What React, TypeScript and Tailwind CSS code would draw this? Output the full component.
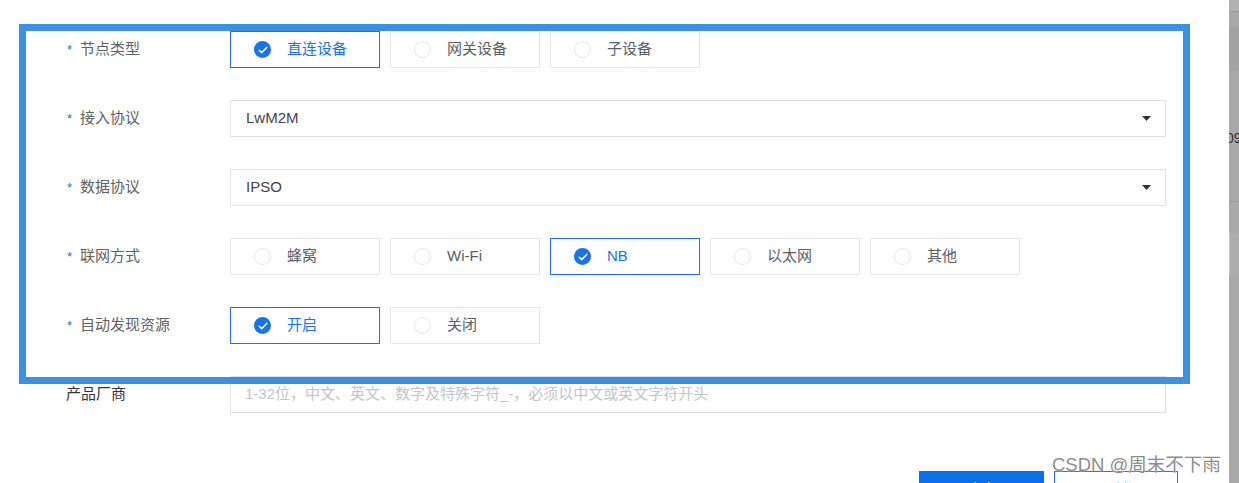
import React from "react";

type Opt = { label: string; checked?: boolean };

function Radio({ label, checked }: Opt) {
    return (
        <div
            className={`w-[150px] h-[37px] flex items-center pl-[23px] border ${
                checked ? "border-[#1a73e8]" : "border-[#e4e6eb]"
            } bg-white`}
        >
            {checked ? (
                <span className="w-[17px] h-[17px] rounded-full bg-[#1a73e8] flex items-center justify-center">
                    <svg width="10" height="8" viewBox="0 0 10 8" fill="none">
                        <path d="M1.2 4.2 L3.8 6.6 L8.8 1.4" stroke="white" strokeWidth="1.5" strokeLinecap="round" strokeLinejoin="round" />
                    </svg>
                </span>
            ) : (
                <span className="w-[17px] h-[17px] rounded-full border border-[#e2e4e8] bg-white" />
            )}
            <span className={`ml-[16px] text-[15px] ${checked ? "text-[#1a73e8]" : "text-[#5a5e66]"}`}>
                {label}
            </span>
        </div>
    );
}

function Label({ text, required = true }: { text: string; required?: boolean }) {
    return (
        <div className="w-[164px] flex items-center text-[15px]">
            {required ? (
                <>
                    <span className="text-[#1a73e8] text-[13px] w-[14px] pl-[1px]">*</span>
                    <span className="text-[#606266]">{text}</span>
                </>
            ) : (
                <span className="text-[#333]">{text}</span>
            )}
        </div>
    );
}

function Select({ value }: { value: string }) {
    return (
        <div className="w-[936px] h-[37px] border border-[#dfe1e6] flex items-center justify-between pl-[15px] pr-[14px] bg-white">
            <span className="text-[15px] text-[#444]">{value}</span>
            <svg width="9" height="5" viewBox="0 0 9 5">
                <path d="M0 0 H9 L4.5 5 Z" fill="#333" />
            </svg>
        </div>
    );
}

export default function App() {
    const font = { fontFamily: '"Liberation Sans", "Noto Sans CJK SC", sans-serif' };

    return (
        <div className="w-[1239px] h-[483px] flex overflow-hidden bg-white" style={font}>
            {/* MODAL BODY */}
            <div className="relative w-[1229px] h-full bg-white">
                <div className="pt-[31px] pl-[66px] flex flex-col gap-[32px]">
                    <div className="flex h-[37px]">
                        <Label text="节点类型" />
                        <div className="flex gap-[10px]">
                            <Radio label="直连设备" checked />
                            <Radio label="网关设备" />
                            <Radio label="子设备" />
                        </div>
                    </div>

                    <div className="flex h-[37px]">
                        <Label text="接入协议" />
                        <Select value="LwM2M" />
                    </div>

                    <div className="flex h-[37px]">
                        <Label text="数据协议" />
                        <Select value="IPSO" />
                    </div>

                    <div className="flex h-[37px]">
                        <Label text="联网方式" />
                        <div className="flex gap-[10px]">
                            <Radio label="蜂窝" />
                            <Radio label="Wi-Fi" />
                            <Radio label="NB" checked />
                            <Radio label="以太网" />
                            <Radio label="其他" />
                        </div>
                    </div>

                    <div className="flex h-[37px]">
                        <Label text="自动发现资源" />
                        <div className="flex gap-[10px]">
                            <Radio label="开启" checked />
                            <Radio label="关闭" />
                        </div>
                    </div>

                    <div className="flex h-[37px]">
                        <Label text="产品厂商" required={false} />
                        <div className="w-[936px] h-[37px] border border-[#dfe1e6] flex items-center pl-[14px]">
                            <span className="text-[15px] text-[#c0c4cc]">
                                1-32位，中文、英文、数字及特殊字符_-，必须以中文或英文字符开头
                            </span>
                        </div>
                    </div>
                </div>

                {/* FOOTER BUTTONS */}
                <div className="mt-[58px] flex justify-end gap-[10px] pr-[51px]">
                    <button className="w-[125px] h-[36px] bg-[#0a6fe8] text-white text-[15px] pt-[2px]">确定</button>
                    <button className="w-[124px] h-[36px] border border-[#1a73e8] bg-white text-[#1a73e8] text-[15px] pt-[2px]">取消</button>
                </div>

                {/* ANNOTATION BOX */}
                <div className="absolute left-[19px] top-[24px] w-[1171px] h-[360px] border-[7px] border-[#3b90e0] pointer-events-none" />

                {/* WATERMARK */}
                <div className="absolute left-[1052px] top-[451px] text-[18.5px] text-[#8c8c8c] whitespace-nowrap [text-shadow:0_0_2px_white]">
                    CSDN @周末不下雨
                </div>
            </div>

            {/* BACKDROP STRIP */}
            <div className="w-[10px] h-full bg-[#a9a9a9] flex flex-col overflow-hidden">
                <div className="h-[12px] bg-[#b3b3b3] border-b border-[#999]" />
                <div className="h-[45px] mt-[14px] bg-[#a2a2a2]" />
                <div className="mt-[60px] text-[14px] leading-none text-[#333] -ml-[3px]">09</div>
                <div className="mt-[56px] h-px bg-[#999]" />
                <div className="mt-[31px] h-[42px] border-l border-[#c4c4c4] bg-[#adadad]" />
            </div>
        </div>
    );
}
